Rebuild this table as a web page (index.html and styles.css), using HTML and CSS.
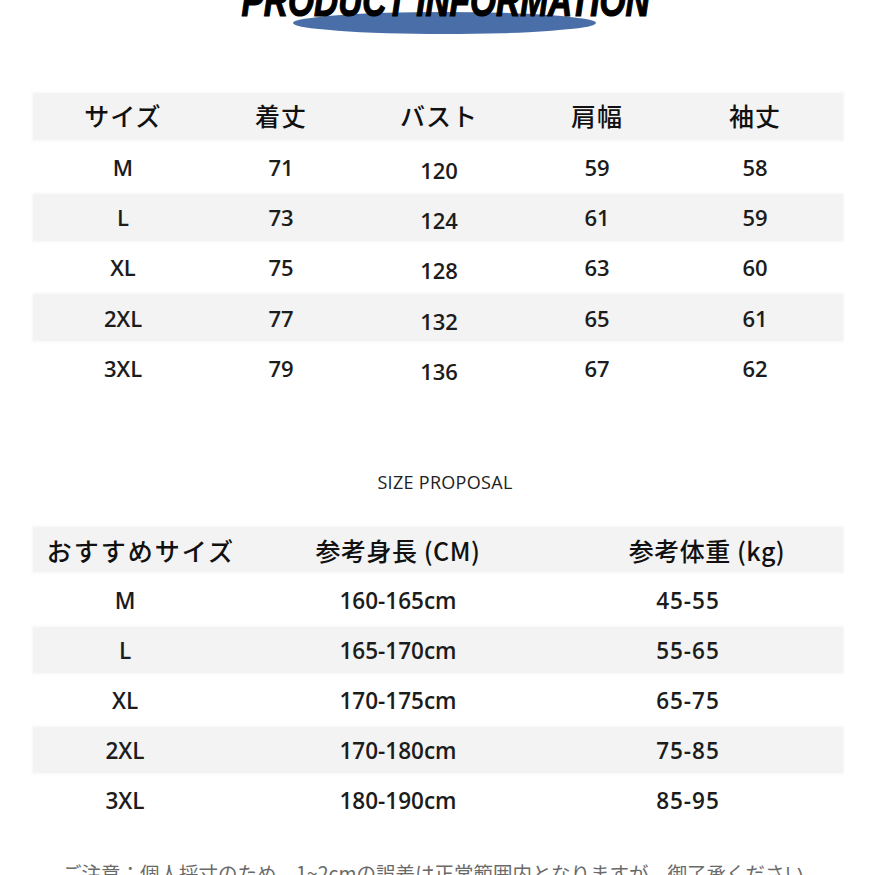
FILE: index.html
```html
<!DOCTYPE html>
<html lang="ja">
<head>
<meta charset="utf-8">
<title>Product Information</title>
<link rel="stylesheet" href="styles.css">
</head>
<body>
<div class="page">
  <div class="title">
    <div class="title-text">PRODUCT INFORMATION</div>
  </div>

  <div class="table t1">
    <div class="row head stripe">
      <div class="c">サイズ</div><div class="c">着丈</div><div class="c">バスト</div><div class="c">肩幅</div><div class="c">袖丈</div>
    </div>
    <div class="row">
      <div class="c v">M</div><div class="c v">71</div><div class="c v low">120</div><div class="c v">59</div><div class="c v">58</div>
    </div>
    <div class="row stripe">
      <div class="c v">L</div><div class="c v">73</div><div class="c v low">124</div><div class="c v">61</div><div class="c v">59</div>
    </div>
    <div class="row">
      <div class="c v">XL</div><div class="c v">75</div><div class="c v low">128</div><div class="c v">63</div><div class="c v">60</div>
    </div>
    <div class="row stripe">
      <div class="c v">2XL</div><div class="c v">77</div><div class="c v low">132</div><div class="c v">65</div><div class="c v">61</div>
    </div>
    <div class="row">
      <div class="c v">3XL</div><div class="c v">79</div><div class="c v low">136</div><div class="c v">67</div><div class="c v">62</div>
    </div>
  </div>

  <div class="subtitle">SIZE PROPOSAL</div>

  <div class="table t2">
    <div class="row head stripe">
      <div class="c a">おすすめサイズ</div><div class="c b">参考身長 (CM)</div><div class="c d">参考体重 (kg)</div>
    </div>
    <div class="row">
      <div class="c a v">M</div><div class="c b v">160-165cm</div><div class="c d v">45-55</div>
    </div>
    <div class="row stripe">
      <div class="c a v">L</div><div class="c b v">165-170cm</div><div class="c d v">55-65</div>
    </div>
    <div class="row">
      <div class="c a v">XL</div><div class="c b v">170-175cm</div><div class="c d v">65-75</div>
    </div>
    <div class="row stripe">
      <div class="c a v">2XL</div><div class="c b v">170-180cm</div><div class="c d v">75-85</div>
    </div>
    <div class="row">
      <div class="c a v">3XL</div><div class="c b v">180-190cm</div><div class="c d v">85-95</div>
    </div>
  </div>

  <div class="note">ご注意：個人採寸のため、1~2cmの誤差は正常範囲内となりますが、御了承ください。</div>
</div>
</body>
</html>
```

FILE: styles.css
```css
html, body {
  margin: 0;
  padding: 0;
  background: #ffffff;
}
body {
  width: 875px;
  height: 875px;
  overflow: hidden;
  font-family: "Noto Sans CJK JP", "Noto Sans", sans-serif;
  color: #1a1a1a;
}
.page {
  display: flex;
  flex-direction: column;
}
.title {
  position: relative;
  height: 40px;
}
.title::before {
  content: "";
  position: absolute;
  left: 293px;
  top: 12px;
  width: 303px;
  height: 22px;
  border-radius: 50%;
  background: #4a6fa8;
}
.title-text {
  position: relative;
  margin-top: -21px;
  height: 44px;
  font-family: "Liberation Sans", Arial, sans-serif;
  font-weight: 900;
  font-style: italic;
  font-size: 44px;
  line-height: 44px;
  text-align: center;
  color: #000;
  -webkit-text-stroke: 1.2px #000;
  transform: scaleX(0.76);
  transform-origin: 449px 0;
  padding-left: 14px;
  white-space: nowrap;
}
.table {
  margin: 0 32px 0 33px;
  display: flex;
  flex-direction: column;
}
.t1 {
  margin-top: 53px;
  gap: 3.3px;
}
.t1 .row {
  display: grid;
  grid-template-columns: repeat(5, 158px);
  padding: 0 11px;
  height: 47px;
  align-items: center;
}
.t1 .head .c {
  padding-bottom: 3px;
}
.stripe {
  background: #f3f3f3;
  box-shadow: 0 0 3px 1px #f6f6f6;
}
.c {
  text-align: center;
  white-space: nowrap;
}
.head .c {
  font-family: "Noto Sans CJK JP", sans-serif;
  font-weight: 500;
  font-size: 25px;
  letter-spacing: 1px;
  color: #111;
}
.v {
  font-family: "Open Sans", "Noto Sans", sans-serif;
  font-weight: 600;
  font-size: 22px;
  color: #1c1c1c;
}
.t1 .low {
  padding-top: 6px;
}
.subtitle {
  margin-top: 80px;
  text-align: center;
  font-family: "Open Sans", sans-serif;
  font-weight: 500;
  font-size: 18px;
  line-height: 22px;
  letter-spacing: 0.3px;
  color: #222;
  padding-left: 15px;
}
.t2 {
  margin-top: 34px;
  gap: 4px;
}
.t2 .row {
  display: grid;
  grid-template-columns: 216px 298px 296px;
  height: 46px;
  align-items: center;
}
.t2 .head {
  height: 45px;
  margin-bottom: 1px;
}
.t2 .head .c {
  letter-spacing: 2px;
}
.t2 .head .b, .t2 .head .d {
  letter-spacing: 0.5px;
}
.t2 .v {
  font-size: 22.5px;
}
.t2 .a.v {
  padding-right: 32px;
}
.t2 .head .d {
  padding-left: 24px;
}
.t2 .d.v {
  padding-right: 14px;
  letter-spacing: 1px;
}
.note {
  margin-top: 36px;
  margin-left: 62px;
  font-family: "Noto Sans CJK JP", sans-serif;
  font-weight: 400;
  font-size: 19.5px;
  line-height: 28px;
  color: #6a6a6a;
  white-space: nowrap;
}
```
